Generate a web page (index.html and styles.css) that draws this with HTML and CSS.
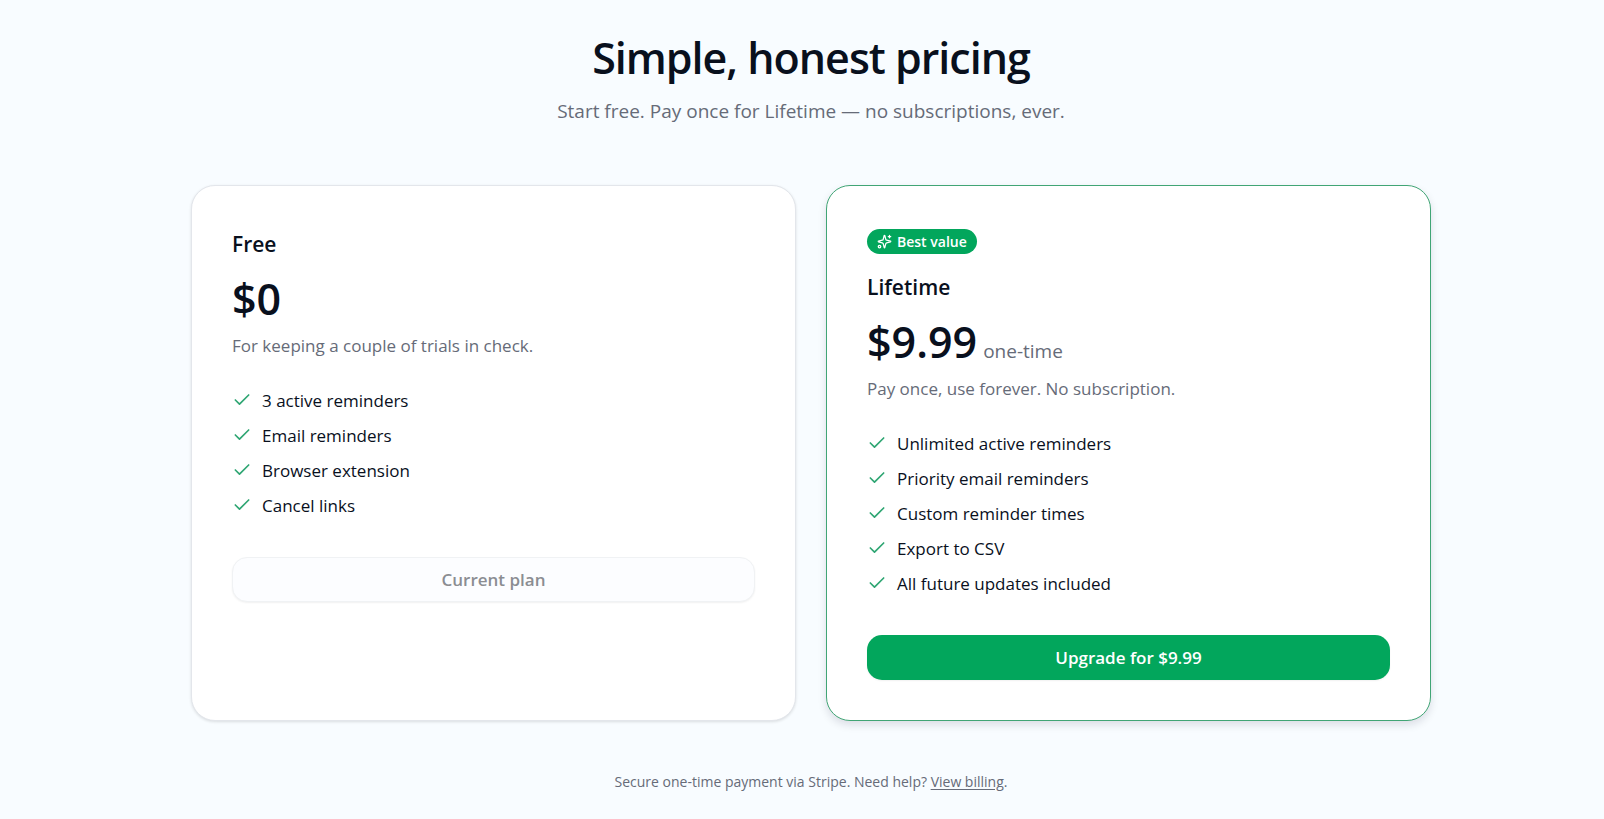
FILE: index.html
```html
<!DOCTYPE html>
<html lang="en">

<head>
  <meta charset="UTF-8">
  <meta name="viewport" content="width=device-width, initial-scale=1.0">
  <title>Pricing</title>
  <link rel="stylesheet" href="styles.css">
</head>

<body>

  <!-- shared icons -->
  <svg class="sprite" aria-hidden="true">
    <symbol id="check" viewBox="0 0 24 24">
      <path d="M20 6 9 17l-5-5" />
    </symbol>
    <symbol id="sparkles" viewBox="0 0 24 24">
      <path d="M9.94 15.5A2 2 0 0 0 8.5 14.06l-6.14-1.58a.5.5 0 0 1 0-.96L8.5 9.94A2 2 0 0 0 9.94 8.5l1.58-6.14a.5.5 0 0 1 .96 0l1.58 6.14a2 2 0 0 0 1.44 1.44l6.14 1.58a.5.5 0 0 1 0 .96l-6.14 1.58a2 2 0 0 0-1.44 1.44l-1.58 6.14a.5.5 0 0 1-.96 0z" />
      <path d="M20 2v4M22 4h-4" />
      <circle cx="4" cy="20" r="2" />
    </symbol>
  </svg>

  <main class="pricing">
    <header class="pricing__header">
      <h1 class="pricing__title">Simple, honest pricing</h1>
      <p class="pricing__subtitle">Start free. Pay once for Lifetime — no subscriptions, ever.</p>
    </header>

    <div class="pricing__plans">
      <section class="plan">
        <h2 class="plan__name">Free</h2>
        <p class="plan__price">$0</p>
        <p class="plan__text">For keeping a couple of trials in check.</p>
        <ul class="plan__list">
          <li><svg class="icon"><use href="#check" /></svg>3 active reminders</li>
          <li><svg class="icon"><use href="#check" /></svg>Email reminders</li>
          <li><svg class="icon"><use href="#check" /></svg>Browser extension</li>
          <li><svg class="icon"><use href="#check" /></svg>Cancel links</li>
        </ul>
        <button type="button" class="button button_outline" disabled>Current plan</button>
      </section>

      <section class="plan plan_featured">
        <span class="badge"><svg class="icon badge__icon"><use href="#sparkles" /></svg>Best value</span>
        <h2 class="plan__name">Lifetime</h2>
        <p class="plan__price">$9.99 <span class="plan__period">one-time</span></p>
        <p class="plan__text">Pay once, use forever. No subscription.</p>
        <ul class="plan__list">
          <li><svg class="icon"><use href="#check" /></svg>Unlimited active reminders</li>
          <li><svg class="icon"><use href="#check" /></svg>Priority email reminders</li>
          <li><svg class="icon"><use href="#check" /></svg>Custom reminder times</li>
          <li><svg class="icon"><use href="#check" /></svg>Export to CSV</li>
          <li><svg class="icon"><use href="#check" /></svg>All future updates included</li>
        </ul>
        <button type="button" class="button">Upgrade for $9.99</button>
      </section>
    </div>

    <p class="pricing__note">Secure one-time payment via Stripe. Need help? <a href="#">View billing</a>.</p>
  </main>

</body>
</html>
```

FILE: styles.css
```css
* {
  box-sizing: border-box;
  margin: 0;
  padding: 0;
}

body {
  font-family: "Segoe UI", "Open Sans", "Noto Sans", sans-serif;
  font-size: 17px;
  line-height: 25px;
  color: #09101d;
  background-color: #f8fcff;
  padding-left: 18px;
}

.sprite {
  display: none;
}

.pricing {
  max-width: 1280px;
  margin: 0 auto;
  padding: 33px 20px 20px;
}

.pricing__header {
  text-align: center;
  margin-bottom: 59px;
}

.pricing__title {
  font-size: 43px;
  font-weight: 600;
  line-height: 50px;
  letter-spacing: -1px;
}

.pricing__subtitle {
  font-size: 19px;
  line-height: 30px;
  margin-top: 13px;
  color: #666b78;
}

.pricing__plans {
  display: grid;
  grid-template-columns: 1fr 1fr;
  gap: 30px;
}

.plan {
  padding: 43px 40px 40px;
  background-color: #fff;
  border: 1px solid #e3e6eb;
  border-radius: 24px;
  box-shadow: 0 1px 3px rgba(0, 0, 0, 0.12);
}

.plan_featured {
  border-color: #41a575;
  box-shadow: 0 4px 8px rgba(20, 10, 40, 0.12);
}

.plan__name {
  font-size: 21px;
  font-weight: 600;
  line-height: 30px;
}

.plan__price {
  display: flex;
  align-items: baseline;
  gap: 6px;
  height: 50px;
  font-size: 43px;
  font-weight: 600;
  line-height: 50px;
  margin-top: 15px;
}

.plan__period {
  font-size: 19px;
  font-weight: 400;
  line-height: 25px;
  color: #666b78;
}

.plan__text {
  margin-top: 9px;
  color: #666b78;
}

.plan__list {
  display: grid;
  gap: 10px;
  margin: 30px 0 39px;
  list-style: none;
}

.plan__list li {
  display: flex;
  gap: 10px;
}

.icon {
  flex: none;
  width: 20px;
  height: 20px;
  margin-top: 2px;
  fill: none;
  stroke: #2fa673;
  stroke-width: 2;
  stroke-linecap: round;
  stroke-linejoin: round;
}

.badge {
  display: flex;
  align-items: center;
  gap: 5px;
  width: fit-content;
  height: 25px;
  margin-bottom: 18px;
  padding: 0 10px;
  font-size: 14px;
  font-weight: 600;
  color: #fff;
  background-color: #02a65c;
  border-radius: 13px;
}

.badge__icon {
  width: 15px;
  height: 15px;
  margin: 0;
  stroke: #fff;
}

.button {
  display: block;
  width: 100%;
  height: 45px;
  font: inherit;
  font-weight: 600;
  color: #fff;
  background-color: #02a65c;
  border: 0;
  border-radius: 15px;
  box-shadow: 0 1px 2px rgba(0, 0, 0, 0.06);
  cursor: pointer;
}

.button_outline {
  color: #8b8d92;
  background-color: #fcfdff;
  border: 1px solid #f0f2f4;
  cursor: default;
}

.pricing__note {
  margin-top: 48px;
  font-size: 14px;
  text-align: center;
  color: #666b78;
}

.pricing__note a {
  color: inherit;
  text-underline-offset: 2px;
}

@media (max-width: 767px) {
  body {
    padding-left: 0;
  }

  .pricing__plans {
    grid-template-columns: 1fr;
  }
}
```
